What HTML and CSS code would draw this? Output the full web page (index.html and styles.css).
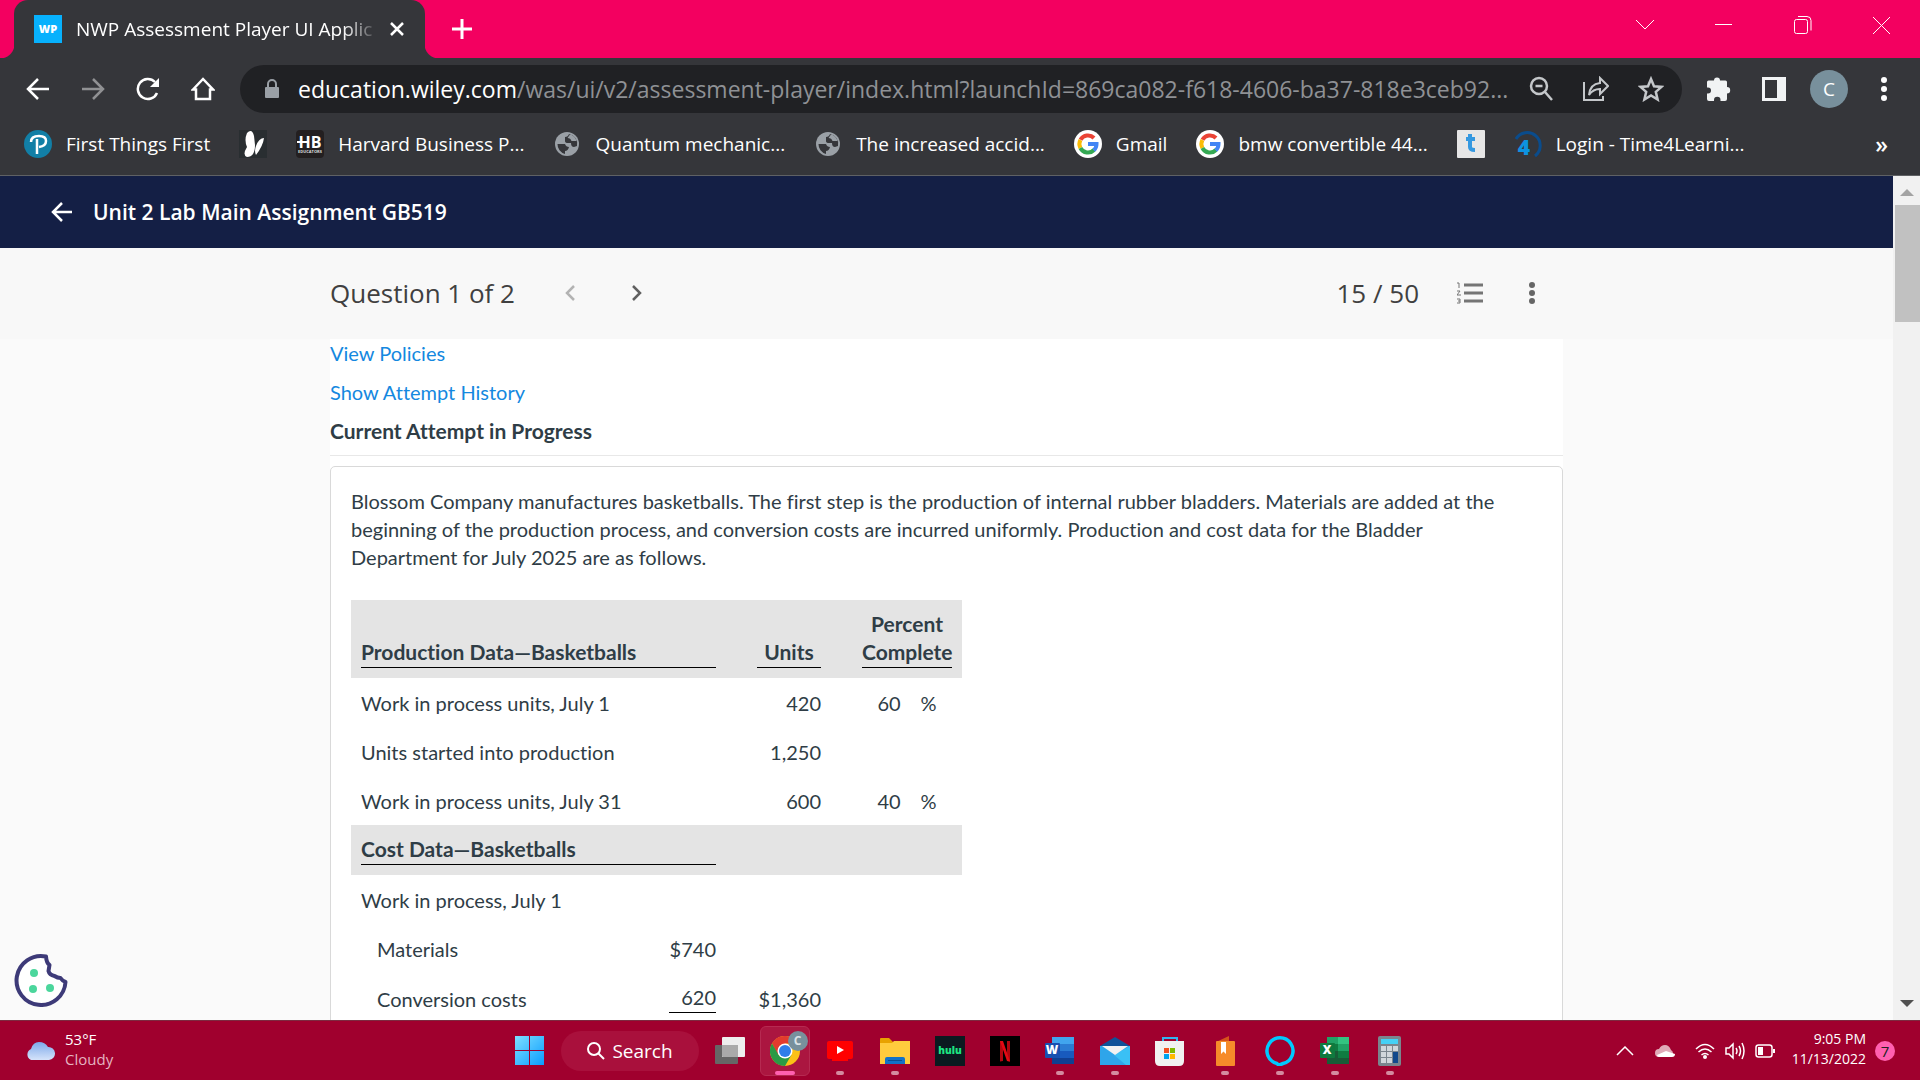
FILE: index.html
```html
<!DOCTYPE html>
<html lang="en">
<head>
    <meta charset="UTF-8">
    <meta name="viewport" content="width=device-width, initial-scale=1.0">
    <title>NWP Assessment Player UI Application</title>
    <link rel="stylesheet" href="styles.css">
</head>
<body>

    <!-- shared icons -->
    <svg class="defs" width="0" height="0">
        <symbol id="globe" viewBox="0 0 28 28">
            <circle cx="14" cy="14" r="12" fill="#9aa0a6"/>
            <path d="M4.500 14H12q1 3 4 3-1 4-4 4v3A10 10 0 0 1 4.500 14z" fill="#35363a"/>
            <path d="M16 4q-1 3-4 3v4q0 2 3 2h3q0 4 3 4l3-1A10 10 0 0 0 16 4z" fill="#35363a"/>
            <path d="M17 4.500q5 1 6.500 6.500h-5q-1-3-4-3z" fill="#9aa0a6"/>
        </symbol>
        <symbol id="google" viewBox="0 0 28 28">
            <circle cx="14" cy="14" r="14" fill="#fff"/>
            <g fill="none" stroke-width="4">
                <path d="M6.500 9.800A8.500 8.500 0 0 1 20 8" stroke="#ea4335"/>
                <path d="M6.400 18A8.500 8.500 0 0 1 6.400 10" stroke="#fbbc05"/>
                <path d="M20 20A8.500 8.500 0 0 1 6.400 18" stroke="#34a853"/>
                <path d="M14 14h8.500q0 4-2.800 6.300" stroke="#4285f4"/>
            </g>
        </symbol>
    </svg>

    <div class="tab-strip">
        <div class="tab">
            <svg class="favicon" width="28" height="28" viewBox="0 0 28 28"><rect width="28" height="28" fill="#07b1fd"/><text x="14" y="18" text-anchor="middle" font-size="11" font-weight="800" fill="#fff">WP</text></svg>
            <span class="tab-title">NWP Assessment Player UI Applic</span>
            <button class="icon-btn" aria-label="Close tab"><svg width="16" height="16" viewBox="0 0 16 16"><path d="M2 2l12 12M14 2L2 14" stroke="#fff" stroke-width="2.500"/></svg></button>
        </div>
        <button class="icon-btn new-tab" aria-label="New tab"><svg width="22" height="22" viewBox="0 0 22 22"><path d="M11 1v20M1 11h20" stroke="#fff" stroke-width="3"/></svg></button>
        <div class="window-controls">
            <button class="icon-btn" aria-label="Search tabs"><svg width="20" height="20" viewBox="0 0 20 20"><path d="M1 5l9 9 9-9"/></svg></button>
            <button class="icon-btn" aria-label="Minimize"><svg width="20" height="20" viewBox="0 0 20 20"><path d="M1 9.500h17"/></svg></button>
            <button class="icon-btn" aria-label="Restore"><svg width="20" height="20" viewBox="0 0 20 20"><rect x="1.500" y="4.500" width="13" height="14" rx="2"/><path d="M5 1.500h9q4 0 4 4v10"/></svg></button>
            <button class="icon-btn" aria-label="Close"><svg width="20" height="20" viewBox="0 0 20 20"><path d="M1 2l17 17M18 2L1 19"/></svg></button>
        </div>
    </div>

    <div class="toolbar">
        <div class="nav-buttons">
            <button class="icon-btn" aria-label="Back"><svg width="24" height="24" viewBox="0 0 24 24"><path d="M23 12H3M12 2L2 12l10 10"/></svg></button>
            <button class="icon-btn muted" aria-label="Forward"><svg width="24" height="24" viewBox="0 0 24 24"><path d="M1 12h20M12 2l10 10-10 10"/></svg></button>
            <button class="icon-btn" aria-label="Reload"><svg width="24" height="24" viewBox="0 0 24 24"><path d="M19 5A10 10 0 1 0 21 16"/><path d="M23 1v9h-9z" fill="#fff" stroke="none"/></svg></button>
            <button class="icon-btn" aria-label="Home"><svg width="24" height="24" viewBox="0 0 24 24"><path d="M2 12.500L12 2l10 10.500h-3V22H5v-9.500z"/></svg></button>
        </div>
        <div class="omnibox">
            <svg width="16" height="20" viewBox="0 0 16 20"><rect x="1" y="8" width="14" height="11" rx="1" fill="#9aa0a6"/><path d="M4 9V5a4 4 0 0 1 8 0v4" fill="none" stroke="#9aa0a6" stroke-width="2"/></svg>
            <span class="url"><b>education.wiley.com</b>/was/ui/v2/assessment-player/index.html?launchId=869ca082-f618-4606-ba37-818e3ceb92...</span>
            <div class="omnibox-actions">
                <button class="icon-btn" aria-label="Zoom"><svg width="26" height="26" viewBox="0 0 26 26"><circle cx="11" cy="10" r="8"/><path d="M17 16l7 8M7.500 10h7"/></svg></button>
                <button class="icon-btn" aria-label="Share"><svg class="thin" width="26" height="26" viewBox="0 0 26 26"><path d="M1 6v18h19v-4"/><path d="M17 2l8 8-8 8v-5q-7 0-11 6 1-11 11-12z"/></svg></button>
                <button class="icon-btn" aria-label="Bookmark this page"><svg width="26" height="26" viewBox="0 0 26 26"><path d="M13 3l3 7.300 7.500.6-5.700 5 1.800 7.600-6.600-4.100-6.600 4.100 1.800-7.600-5.700-5 7.500-.6z"/></svg></button>
            </div>
        </div>
        <div class="toolbar-end">
            <button class="icon-btn" aria-label="Extensions"><svg width="26" height="26" viewBox="0 0 26 26"><path d="M8 4.500a3 3 0 0 1 6 0h5.500q1.500 0 1.500 1.500v5a3.200 3.200 0 0 1 0 6.400V23q0 2-2 2h-4.500v-1a3 3 0 0 0-6.500 0v1H3q-2 0-2-2v-5.500h1a3 3 0 0 0 0-6H1V6q0-1.500 1.500-1.500z" fill="#f1f3f4"/></svg></button>
            <button class="icon-btn" aria-label="Side panel"><svg width="26" height="26" viewBox="0 0 26 26"><path d="M1 1h24v24H1zM4 4v18h12V4z" fill="#f1f3f4" fill-rule="evenodd"/></svg></button>
            <button class="avatar">C</button>
            <button class="icon-btn" aria-label="Menu"><svg width="6" height="24" viewBox="0 0 6 24"><g fill="#fff"><circle cx="3" cy="3" r="3"/><circle cx="3" cy="12" r="3"/><circle cx="3" cy="21" r="3"/></g></svg></button>
        </div>
    </div>

    <nav class="bookmarks">
        <a href="#"><svg width="28" height="28" viewBox="0 0 28 28"><circle cx="14" cy="14" r="14" fill="#127fa6"/><path d="M7 12q0-6 8-6 7 0 7 5 0 5-7 6M13 9v15" fill="none" stroke="#fff" stroke-width="2.500"/></svg>First Things First</a>
        <a href="#" aria-label="Butterfly"><svg width="28" height="28" viewBox="0 0 28 28"><rect width="28" height="28" fill="#292e31"/><path d="M8 3q5-5 7 3l1 9q0 12-8 12-5-2 0-10Q5 10 8 3zM17 16q3-8 8-8-1 8-8 17-2-4 0-9z" fill="#fff"/></svg></a>
        <a href="#"><svg width="28" height="28" viewBox="0 0 28 28"><rect width="28" height="28" rx="4" fill="#231f20"/><path d="M1 12h12" stroke="#fff" stroke-width="2"/><text x="14" y="18" text-anchor="middle" font-size="16" font-weight="700" fill="#fff">HB</text><text x="14" y="23" text-anchor="middle" font-size="4" font-weight="700" fill="#ddd">EDUCATORS</text></svg>Harvard Business P...</a>
        <a href="#"><svg width="28" height="28"><use href="#globe"/></svg>Quantum mechanic...</a>
        <a href="#"><svg width="28" height="28"><use href="#globe"/></svg>The increased accid...</a>
        <a href="#"><svg width="28" height="28"><use href="#google"/></svg>Gmail</a>
        <a href="#"><svg width="28" height="28"><use href="#google"/></svg>bmw convertible 44...</a>
        <a href="#" aria-label="t"><svg width="28" height="28" viewBox="0 0 28 28"><rect width="28" height="28" rx="1" fill="#e6e6e6"/><path d="M13 4v13q0 3 5 3M9 9h9" fill="none" stroke="#3498e0" stroke-width="4"/></svg></a>
        <a href="#"><svg width="28" height="28" viewBox="0 0 28 28"><path d="M2 9a13 13 0 1 1 19 17" fill="none" stroke="#0a4c8c" stroke-width="3"/><text x="10" y="25" text-anchor="middle" font-size="21" font-weight="800" fill="#0d93e0">4</text></svg>Login - Time4Learni...</a>
        <button class="icon-btn overflow" aria-label="More bookmarks">»</button>
    </nav>

    <div class="viewport">
        <main class="page">
            <header class="app-header">
                <button class="icon-btn" aria-label="Back to assignments"><svg width="22" height="22" viewBox="0 0 22 22"><path d="M21 11H3M11 2l-9 9 9 9" fill="none" stroke="#fff" stroke-width="2.500"/></svg></button>
                <h1>Unit 2 Lab Main Assignment GB519</h1>
            </header>

            <div class="question-bar">
                <div class="column question-row">
                    <h2>Question 1 of 2</h2>
                    <div class="pager">
                        <button class="icon-btn" aria-label="Previous question"><svg width="12" height="16" viewBox="0 0 12 16"><path d="M10 1L3 8l7 7" fill="none" stroke="#b3b3b3" stroke-width="2.500"/></svg></button>
                        <button class="icon-btn" aria-label="Next question"><svg width="12" height="16" viewBox="0 0 12 16"><path d="M2 1l7 7-7 7" fill="none" stroke="#606060" stroke-width="2.500"/></svg></button>
                    </div>
                    <span class="score">15 / 50</span>
                    <button class="icon-btn" aria-label="Question list"><svg width="26" height="22" viewBox="0 0 26 22"><path d="M7 3h19M7 11h19M7 19h19" stroke="#757575" stroke-width="3"/><path d="M0 1h2v5M0 9h3l-3 4h4M0 17h3v4H0M1 19h2" fill="none" stroke="#757575" stroke-width="1"/></svg></button>
                    <button class="icon-btn" aria-label="Question options"><svg width="6" height="22" viewBox="0 0 6 22"><g fill="#666"><circle cx="3" cy="3" r="3"/><circle cx="3" cy="11" r="3"/><circle cx="3" cy="19" r="3"/></g></svg></button>
                </div>
            </div>

            <div class="column content">
                <div class="attempt">
                    <a href="#">View Policies</a>
                    <a href="#">Show Attempt History</a>
                    <strong>Current Attempt in Progress</strong>
                </div>

                <div class="card">
                    <p>Blossom Company manufactures basketballs. The first step is the production of internal rubber bladders. Materials are added at the beginning of the production process, and conversion costs are incurred uniformly. Production and cost data for the Bladder Department for July 2025 are as follows.</p>

                    <table>
                        <colgroup>
                            <col class="col-name"><col class="col-amount"><col class="col-gap"><col class="col-units"><col class="col-gap"><col class="col-percent">
                        </colgroup>
                        <tr class="head">
                            <th colspan="2"><span class="rule">Production Data—Basketballs</span></th>
                            <th></th>
                            <th class="center"><span class="rule">Units</span></th>
                            <th></th>
                            <th class="center"><span class="rule">Percent<br>Complete</span></th>
                        </tr>
                        <tr><td colspan="2">Work in process units, July 1</td><td></td><td class="num">420</td><td></td><td class="pct"><span>60</span><span>%</span></td></tr>
                        <tr><td colspan="2">Units started into production</td><td></td><td class="num">1,250</td><td></td><td></td></tr>
                        <tr><td colspan="2">Work in process units, July 31</td><td></td><td class="num">600</td><td></td><td class="pct"><span>40</span><span>%</span></td></tr>
                        <tr class="head"><th colspan="2"><span class="rule">Cost Data—Basketballs</span></th><th></th><th></th><th></th><th></th></tr>
                        <tr><td colspan="2">Work in process, July 1</td><td></td><td></td><td></td><td></td></tr>
                        <tr><td class="indent">Materials</td><td class="num">$740</td><td></td><td></td><td></td><td></td></tr>
                        <tr><td class="indent">Conversion costs</td><td class="num"><span class="rule">620</span></td><td></td><td class="num">$1,360</td><td></td><td></td></tr>
                    </table>
                </div>
            </div>
        </main>

        <div class="scrollbar">
            <svg width="14" height="8" viewBox="0 0 14 8"><path d="M0 8l7-7 7 7z" fill="#a3a3a3"/></svg>
            <div class="thumb"></div>
            <svg class="down" width="14" height="8" viewBox="0 0 14 8"><path d="M0 0h14L7 7z" fill="#505050"/></svg>
        </div>

        <button class="icon-btn cookie" aria-label="Cookie settings"><svg width="54" height="54" viewBox="0 0 54 54"><path d="M32 3.500A24.500 24.500 0 1 0 51.500 29q-3-1-5-4-3 0-6-2-5-1-6-5l1-6q-3-2-3.500-8.500z" fill="#fff" stroke="#3d3a78" stroke-width="4" stroke-linejoin="round"/><g fill="#4bd69c"><circle cx="20" cy="20" r="4"/><circle cx="19" cy="36" r="4"/><circle cx="36" cy="35" r="4"/></g></svg></button>
    </div>

    <footer class="taskbar">
        <button class="weather">
            <svg width="30" height="20" viewBox="0 0 30 20"><defs><linearGradient id="sky" x2="0" y2="1"><stop stop-color="#7da9ea"/><stop offset="1" stop-color="#d5e3fa"/></linearGradient></defs><path d="M6 19a6 6 0 0 1 0-11Q8 1 14 1t9 5a6.500 6.500 0 0 1 1 13z" fill="url(#sky)"/></svg>
            <span class="weather-text">53°F<br><small>Cloudy</small></span>
        </button>

        <div class="apps">
            <button class="app" aria-label="Start"><svg width="30" height="30" viewBox="0 0 30 30"><defs><linearGradient id="win" x2="1" y2="1"><stop stop-color="#7ee0ff"/><stop offset="1" stop-color="#0a9cff"/></linearGradient></defs><path d="M0 0h14v14H0zM15 0h14v14H15zM0 15h14v14H0zM15 15h14v14H15z" fill="url(#win)"/></svg></button>
            <button class="search"><svg width="18" height="18" viewBox="0 0 18 18"><circle cx="7" cy="7" r="6" fill="none" stroke="#fff" stroke-width="2"/><path d="M11 11l6 6" stroke="#fff" stroke-width="2"/></svg>Search</button>
            <button class="app" aria-label="Task view"><svg width="30" height="30" viewBox="0 0 30 30"><rect y="9" width="23" height="19" rx="1" fill="#666"/><rect x="7" y="1" width="23" height="20" rx="1" fill="#eee"/><path d="M7 9h16v12H8l-1-1z" fill="#aaa"/></svg></button>
            <button class="app active" aria-label="Chrome">
                <svg width="30" height="30" viewBox="0 0 30 30"><circle cx="15" cy="15" r="15" fill="#fbc116"/><path d="M2 7.500A15 15 0 0 1 28 7.500H15L8 19z" fill="#e33b2e"/><path d="M2 7.500A15 15 0 0 0 15 30l6.500-11.300-13 0z" fill="#2a9a45"/><circle cx="15" cy="15" r="7.500" fill="#fff"/><circle cx="15" cy="15" r="6" fill="#2f7de9"/></svg>
                <span class="badge">C</span>
            </button>
            <button class="app open" aria-label="YouTube"><svg width="30" height="30" viewBox="0 0 30 30"><rect x="2" y="5" width="26" height="18" rx="2" fill="#f00"/><path d="M7 24h16" stroke="#f00" stroke-width="2"/><path d="M12 10l7 4-7 4z" fill="#fff"/></svg></button>
            <button class="app open" aria-label="File Explorer"><svg width="30" height="30" viewBox="0 0 30 30"><path d="M0 3q0-1 1-1h8l4 4h4v6H0z" fill="#e8a200"/><path d="M0 7h12l2-2h16v23H0z" fill="#ffcb3d"/><path d="M5 28v-5q0-2 2-2h16q2 0 2 2v5z" fill="#1272c8"/><path d="M8 24.500h14" stroke="#0a4f94"/></svg></button>
            <button class="app" aria-label="Hulu"><svg width="30" height="30" viewBox="0 0 30 30"><rect width="30" height="30" fill="#0b1a20"/><text x="15" y="18" text-anchor="middle" font-size="10" font-weight="800" fill="#1ce783">hulu</text></svg></button>
            <button class="app" aria-label="Netflix"><svg width="30" height="30" viewBox="0 0 30 30"><rect width="30" height="30" fill="#000"/><path d="M10 5h3v20l-3 .5zM17 5h3v20.500l-3-.5z" fill="#b1060f"/><path d="M10 5h3l7 20.500-3-.5z" fill="#e50914"/></svg></button>
            <button class="app open" aria-label="Word"><svg width="30" height="30" viewBox="0 0 30 30"><path d="M7 1h22v7H7z" fill="#41a5ee"/><path d="M7 8h22v7H7z" fill="#2b7cd3"/><path d="M7 15h22v7H7z" fill="#185abd"/><path d="M7 22h22v6H7z" fill="#103f91"/><rect y="7" width="15" height="15" rx="1" fill="#1850b0"/><text x="7" y="18" text-anchor="middle" font-size="12" font-weight="800" fill="#fff">W</text></svg></button>
            <button class="app open" aria-label="Mail"><svg width="30" height="30" viewBox="0 0 30 30"><path d="M0 10L15 1l15 9z" fill="#0f5299"/><path d="M0 10h30v19H0z" fill="#2ea5ea"/><path d="M30 10v19H26L14 19z" fill="#3ac0f5"/><path d="M2 10h26l-13 9z" fill="#f2f2f2"/></svg></button>
            <button class="app" aria-label="Microsoft Store"><svg width="30" height="30" viewBox="0 0 30 30"><path d="M8 6V2h14v4" fill="none" stroke="#32b4ee" stroke-width="2"/><path d="M0 5h29v20q0 5-5 5H5q-5 0-5-5z" fill="#f1f1f1"/><path d="M9 12h5v5H9z" fill="#f25022"/><path d="M15 12h5v5h-5z" fill="#7fba00"/><path d="M9 18h5v5H9z" fill="#00a4ef"/><path d="M15 18h5v5h-5z" fill="#ffb900"/></svg></button>
            <button class="app open" aria-label="Books"><svg width="30" height="30" viewBox="0 0 30 30"><path d="M6 6l13-6v6z" fill="#d6521b"/><rect x="6" y="5" width="19" height="25" rx="1" fill="#f68b2a"/><path d="M11 6h5v12l-2.500-2.500L11 18z" fill="#fff"/></svg></button>
            <button class="app open" aria-label="Alexa"><svg width="30" height="30" viewBox="0 0 30 30"><path d="M12 27.500A13 13 0 1 1 18 27.500q-3 1-4 2z" fill="none" stroke="#00caff" stroke-width="3.500"/></svg></button>
            <button class="app open" aria-label="Excel"><svg width="30" height="30" viewBox="0 0 30 30"><path d="M7 1h11v7H7z" fill="#21a366"/><path d="M18 1h11v7H18z" fill="#33c481"/><path d="M7 8h11v7H7z" fill="#107c41"/><path d="M18 8h11v7H18z" fill="#21a366"/><path d="M7 15h22v13H7z" fill="#185c37"/><path d="M18 15h11v7H18z" fill="#107c41"/><rect y="7" width="15" height="15" rx="1" fill="#0f7a3e"/><text x="7" y="18" text-anchor="middle" font-size="12" font-weight="800" fill="#fff">X</text></svg></button>
            <button class="app open" aria-label="Calculator"><svg width="30" height="30" viewBox="0 0 30 30"><rect x="3" width="23" height="30" rx="2" fill="#7a858e"/><path d="M6 3h17v5H6z" fill="#45d0f5"/><path d="M6 10h5v5H6zM12 10h5v5h-5zM18 10h5v5h-5zM6 16h5v5H6zM12 16h5v5h-5zM6 22h5v5H6zM12 22h5v5h-5z" fill="#d0d6db"/><path d="M18 16h5v11h-5z" fill="#12498c"/></svg></button>
        </div>

        <div class="tray">
            <button class="icon-btn" aria-label="Show hidden icons"><svg width="18" height="10" viewBox="0 0 18 10"><path d="M1 9l8-8 8 8" fill="none" stroke="#fff" stroke-width="1.500"/></svg></button>
            <button class="icon-btn onedrive" aria-label="OneDrive"><svg width="20" height="14" viewBox="0 0 20 14"><path d="M4 13a4 4 0 0 1 0-8q2-4 6-4t6 5a4 4 0 0 1 0 7z" fill="#e0aab8"/><path d="M2 11l9-4 9 3q0 3-3 3H4q-2 0-2-2z" fill="#fff"/></svg></button>
            <button class="icon-btn status" aria-label="Network, volume, battery">
                <svg width="20" height="16" viewBox="0 0 20 16"><g fill="none" stroke="#fff" stroke-width="1.500"><path d="M1 6q9-9 18 0M3.500 9q6.500-6 13 0M6.500 12q3.500-3 7 0"/></g><circle cx="10" cy="14" r="2" fill="#fff"/></svg>
                <svg width="20" height="18" viewBox="0 0 20 18"><g fill="none" stroke="#fff" stroke-width="1.500"><path d="M1 6h3l4-4v14l-4-4H1zM11 6q2 3 0 6M14 4q3 5 0 10M17 1q4 8 0 16"/></g></svg>
                <svg width="20" height="14" viewBox="0 0 20 14"><rect x="1" y="1" width="16" height="12" rx="2.500" fill="none" stroke="#fff" stroke-width="1.500"/><path d="M3 3h5v8H3zM18 5h2v4h-2z" fill="#fff"/></svg>
            </button>
            <button class="clock">9:05 PM<br>11/13/2022</button>
            <span class="count">7</span>
        </div>
    </footer>

</body>
</html>
```
FILE: styles.css
```css
/* Global Styles */
* {
    box-sizing: border-box;
}

body {
    margin: 0;
    height: 100vh;
    display: flex;
    flex-direction: column;
    overflow: hidden;
    font-family: "Open Sans", sans-serif;
    font-size: 19px;
    color: #fff;
    background: #35363a;
}

svg {
    display: block;
    flex: none;
}

.defs {
    position: absolute;
}

button {
    font: inherit;
    color: inherit;
    border: none;
    background: none;
    padding: 0;
    cursor: pointer;
}

.icon-btn {
    display: flex;
    align-items: center;
    justify-content: center;
    flex: none;
}

/* Tab strip */
.tab-strip {
    display: flex;
    align-items: center;
    height: 58px;
    background: radial-gradient(circle at 0 0, #f30060 14px, #35363a 15px) 0 44px / 14px 14px no-repeat #f30060;
    padding-left: 14px;
}

.tab {
    display: flex;
    align-items: center;
    width: 411px;
    height: 58px;
    padding: 0 20px;
    background: #35363a;
    border-radius: 14px 14px 0 0;
}

/* flared foot on the right side of the tab */
.tab::after {
    content: "";
    align-self: flex-end;
    flex: none;
    width: 14px;
    height: 14px;
    margin-right: -34px;
    margin-left: 20px;
    background: radial-gradient(circle at 100% 0, #f30060 14px, #35363a 15px);
}

.tab-title {
    flex: 1;
    margin: 0 10px 0 14px;
    overflow: hidden;
    white-space: nowrap;
    mask-image: linear-gradient(to right, #000 88%, transparent);
}

.new-tab {
    margin-left: 26px;
}

.window-controls {
    display: flex;
    gap: 59px;
    margin-left: auto;
    padding: 0 28px 8px 0;
}

.window-controls svg {
    fill: none;
    stroke: #fff;
}

/* Toolbar */
.toolbar {
    display: flex;
    align-items: center;
    height: 62px;
    padding: 0 33px 0 26px;
}

.nav-buttons {
    display: flex;
    gap: 31px;
}

.nav-buttons svg {
    fill: none;
    stroke: #fff;
    stroke-width: 2.5;
}

.nav-buttons .muted {
    opacity: 0.45;
}

.omnibox {
    display: flex;
    flex: 1;
    align-items: center;
    min-width: 0;
    height: 48px;
    margin: 0 24px 0 25px;
    padding: 0 18px 0 24px;
    border-radius: 24px;
    background: #202124;
}

.url {
    flex: 1;
    margin-left: 18px;
    overflow: hidden;
    white-space: nowrap;
    font-size: 23px;
    color: #8f9195;
}

.url b {
    font-weight: 400;
    color: #fff;
}

.omnibox-actions {
    display: flex;
    gap: 29px;
}

.omnibox-actions svg {
    fill: none;
    stroke: #c4c7ca;
    stroke-width: 2.5;
}

.omnibox-actions .thin {
    stroke-width: 2;
}

.toolbar-end {
    display: flex;
    align-items: center;
    gap: 29px;
}

.avatar {
    width: 38px;
    height: 38px;
    margin: 0 4px 0 -6px;
    border-radius: 50%;
    background: #78909c;
}

/* Bookmarks */
.bookmarks {
    display: flex;
    align-items: center;
    gap: 29px;
    height: 56px;
    padding: 0 32px 8px 24px;
    border-bottom: 1px solid #5f6164;
}

.bookmarks a {
    display: flex;
    align-items: center;
    gap: 14px;
    color: #fff;
    text-decoration: none;
    white-space: nowrap;
}

.overflow {
    margin-left: auto;
    font-size: 23px;
    font-weight: 600;
    line-height: 28px;
}

/* Page area */
.viewport {
    position: relative;
    display: flex;
    flex: 1;
    min-height: 0;
    overflow: hidden;
}

.page {
    flex: 1;
    overflow: hidden;
    background: #fafafa;
}

.column {
    width: 94%;
    max-width: 1233px;
    margin: 0 auto;
}

.app-header {
    display: flex;
    align-items: center;
    gap: 20px;
    height: 72px;
    padding: 0 51px;
    background: #141f45;
}

.app-header h1 {
    margin: 0;
    font-size: 21px;
    font-weight: 600;
}

.question-bar {
    background: #f8f8f8;
    color: #404040;
}

.question-row {
    display: flex;
    align-items: center;
    height: 91px;
    padding: 0 28px 2px 0;
}

.question-row h2,
.score {
    font-size: 26px;
    font-weight: 400;
}

.pager {
    display: flex;
    gap: 55px;
    margin: 0 auto 0 49px;
}

.score {
    margin-right: 38px;
}

.question-row > .icon-btn:last-child {
    margin-left: 46px;
}

.content {
    background: #fff;
    color: #2f3d46;
    font-family: Lato, sans-serif;
    font-size: 20px;
    font-variant-ligatures: none;
    line-height: 28px;
}

.attempt {
    display: flex;
    flex-direction: column;
    align-items: flex-start;
    gap: 11px;
    padding-bottom: 10px;
    border-bottom: 1px solid #e8e8e8;
}

.attempt a {
    color: #1488e0;
    text-decoration: none;
}

.attempt strong,
th {
    font-size: 21px;
}

.card {
    margin-top: 10px;
    padding: 20px 40px 40px 20px;
    border: 1px solid #d9d9d9;
    border-radius: 5px;
}

.card p {
    margin: 0 0 29px;
}

/* Data table */
table {
    table-layout: fixed;
    width: 611px;
    border-collapse: collapse;
}

.col-name { width: 308px; }
.col-amount { width: 67px; }
.col-gap { width: 21px; }
.col-units { width: 84px; }
.col-percent { width: 110px; }

th,
td {
    height: 49px;
    padding: 10px;
    text-align: left;
    vertical-align: bottom;
}

.head {
    background: #e4e4e4;
}

.rule {
    display: block;
    padding-bottom: 1px;
    border-bottom: 1px solid #000;
}

.center {
    text-align: center;
}

.num {
    text-align: right;
}

.pct {
    text-align: center;
}

.pct span + span {
    margin-left: 20px;
}

.indent {
    padding-left: 26px;
}

/* Scrollbar */
.scrollbar {
    display: flex;
    flex-direction: column;
    align-items: center;
    width: 27px;
    padding: 12px 0;
    background: #f1f1f1;
}

.thumb {
    width: 25px;
    height: 117px;
    margin: 9px 0 0 2px;
    background: #c1c1c1;
}

.scrollbar .down {
    margin-top: auto;
}

.cookie {
    position: absolute;
    left: 14px;
    bottom: 13px;
}

/* Taskbar */
.taskbar {
    display: grid;
    grid-template-columns: 1fr auto 1fr;
    align-items: center;
    height: 60px;
    padding: 0 25px;
    border-top: 1px solid #7d2a40;
    background: #a0002e;
    font-size: 15px;
    line-height: 20px;
}

.weather {
    display: flex;
    align-items: center;
    gap: 10px;
    text-align: left;
}

.weather-text,
.clock {
    padding-bottom: 4px;
}

.weather small {
    font-size: 15px;
    color: #e5b3c0;
}

.apps {
    display: flex;
    align-items: center;
    gap: 5px;
}

.app {
    position: relative;
    display: flex;
    align-items: center;
    justify-content: center;
    width: 50px;
    height: 50px;
    border-radius: 6px;
}

.app.active {
    border: 1px solid #b62a51;
    background: #ab1640;
}

/* running indicator under the icon */
.app.open::after,
.app.active::after {
    content: "";
    position: absolute;
    bottom: 1px;
    width: 8px;
    height: 4px;
    border-radius: 2px;
    background: #d48ba0;
}

.app.active::after {
    bottom: 0;
    width: 20px;
    background: #ff60b0;
}

.badge {
    position: absolute;
    top: 4px;
    right: 1px;
    width: 20px;
    border-radius: 50%;
    background: #78909c;
    font-size: 12px;
    font-weight: 700;
    color: #dce3e6;
}

.search {
    display: flex;
    align-items: center;
    gap: 7px;
    height: 40px;
    margin: 0 1px;
    padding: 0 26px;
    border-radius: 20px;
    background: #a9103c;
    font-size: 19px;
}

.tray {
    display: flex;
    align-items: center;
    justify-content: flex-end;
}

.onedrive {
    margin: 0 20px 0 21px;
}

.status {
    gap: 10px;
}

.clock {
    margin: 0 9px 0 17px;
    text-align: right;
    font-size: 14px;
}

.count {
    width: 20px;
    border-radius: 50%;
    background: #ff60b0;
    text-align: center;
    color: #222;
}
```
